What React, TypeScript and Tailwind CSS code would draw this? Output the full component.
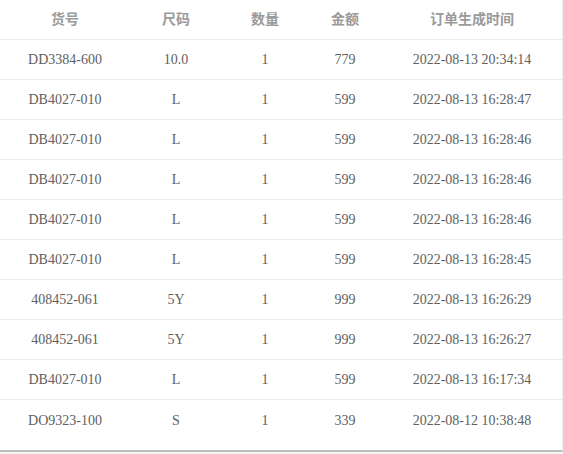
const rows = [
  ["DD3384-600", "10.0", "1", "779", "2022-08-13 20:34:14"],
  ["DB4027-010", "L", "1", "599", "2022-08-13 16:28:47"],
  ["DB4027-010", "L", "1", "599", "2022-08-13 16:28:46"],
  ["DB4027-010", "L", "1", "599", "2022-08-13 16:28:46"],
  ["DB4027-010", "L", "1", "599", "2022-08-13 16:28:46"],
  ["DB4027-010", "L", "1", "599", "2022-08-13 16:28:45"],
  ["408452-061", "5Y", "1", "999", "2022-08-13 16:26:29"],
  ["408452-061", "5Y", "1", "999", "2022-08-13 16:26:27"],
  ["DB4027-010", "L", "1", "599", "2022-08-13 16:17:34"],
  ["DO9323-100", "S", "1", "339", "2022-08-12 10:38:48"],
];

const cols = ["w-[130px]", "w-[92px]", "w-[86px]", "w-[74px]", "flex-1"];
const heads = ["货号", "尺码", "数量", "金额", "订单生成时间"];

export default function App() {
  return (
    <div className="min-h-screen bg-[#f4f4f4] font-['Liberation_Serif','Noto_Sans_CJK_SC',serif]">
      <div className="w-[563px] border-r border-b-2 border-r-[#f0f0f0] border-b-[#bdbdbd] bg-white pb-[10px]">
        <div className="flex h-10 items-center border-b border-[#ececec]">
          {heads.map((h, i) => (
            <div
              key={h}
              className={`${cols[i]} -mt-[2px] text-center font-['Noto_Sans_CJK_SC',sans-serif] text-[14px] font-bold text-[#9a9a9a]`}
            >
              {h}
            </div>
          ))}
        </div>
        {rows.map((r, ri) => (
          <div
            key={ri}
            className={`flex h-10 items-center ${ri < rows.length - 1 ? "border-b border-[#ececec]" : ""}`}
          >
            {r.map((c, i) => (
              <div key={i} className={`${cols[i]} text-center text-[14px] text-[#606060]`}>
                {c}
              </div>
            ))}
          </div>
        ))}
      </div>
    </div>
  );
}
